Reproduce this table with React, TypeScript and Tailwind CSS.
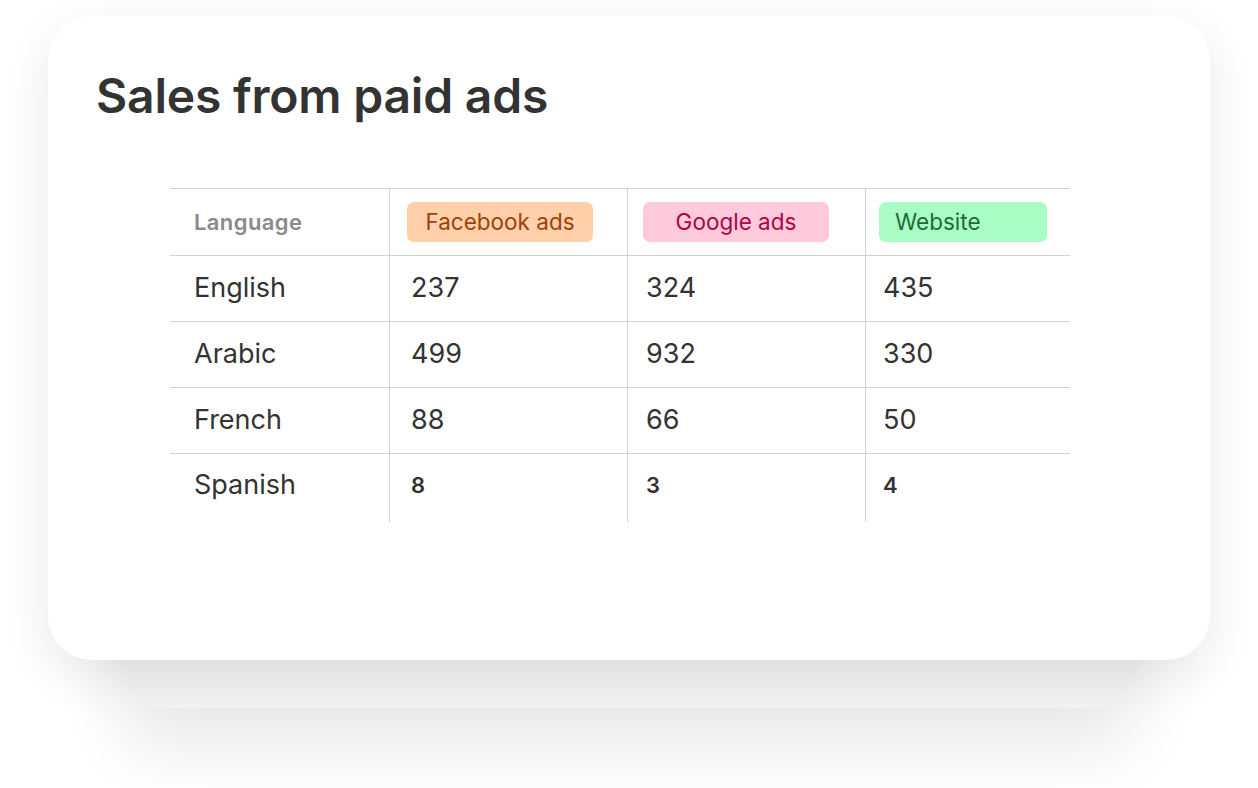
import React from 'react'

const rows = [
  { lang: 'English', fb: '237', g: '324', w: '435' },
  { lang: 'Arabic', fb: '499', g: '932', w: '330' },
  { lang: 'French', fb: '88', g: '66', w: '50' },
  { lang: 'Spanish', fb: '8', g: '3', w: '4', small: true },
]

function Badge({ label, className }: { label: string; className: string }) {
  return (
    <div className={`h-[40px] rounded-[7px] flex items-center text-[22.5px] ${className}`}>
      {label}
    </div>
  )
}

export default function App() {
  return (
    <div
      className="w-[1258px] h-[788px] bg-white overflow-hidden"
      style={{ fontFamily: 'Inter, "Noto Sans", sans-serif' }}
    >
      <div className="relative ml-[48px] mt-[16px] w-[1162px]">
        {/* card behind */}
        <div className="absolute left-[72px] top-[100px] w-[1018px] h-[592px] rounded-[42px] bg-gradient-to-b from-[#e4e4e4] to-[#f3f3f3] shadow-[0_40px_70px_rgba(0,0,0,0.09)]" />

        <div className="relative h-[644px] rounded-[44px] bg-white shadow-[0_16px_50px_rgba(0,0,0,0.09)] pl-[48px] pt-[50px]">
          <h1 className="text-[48px] leading-[60px] font-semibold text-[#333333] tracking-[-0.2px]">
            Sales from paid ads
          </h1>

          <div className="ml-[74px] mt-[62px] w-[900px] grid grid-cols-[219px_238px_238px_205px] border-t-[1.5px] border-[#d2d2d2] text-[#333333]">
            <div className="h-[67px] flex items-center pl-[24px] border-b-[1.5px] border-[#d2d2d2] text-[22px] tracking-[0.4px] font-semibold text-[#8a8a8a]">
              Language
            </div>
            <div className="h-[67px] flex items-center pl-[17px] border-l-[1.5px] border-b-[1.5px] border-[#d2d2d2]">
              <Badge label="Facebook ads" className="w-[186px] justify-center bg-[#ffd0a9] text-[#a1400c]" />
            </div>
            <div className="h-[67px] flex items-center pl-[15px] border-l-[1.5px] border-b-[1.5px] border-[#d2d2d2]">
              <Badge label="Google ads" className="w-[186px] justify-center bg-[#ffcadb] text-[#b3003e]" />
            </div>
            <div className="h-[67px] flex items-center pl-[13px] border-l-[1.5px] border-b-[1.5px] border-[#d2d2d2]">
              <Badge label="Website" className="w-[168px] pl-[16px] bg-[#a9fdc4] text-[#1f6a37]" />
            </div>

            {rows.map((r, i) => {
              const last = i === rows.length - 1
              const rowCls = `${last ? 'h-[68px]' : 'h-[66px] border-b-[1.5px]'} border-[#d2d2d2] flex items-center`
              const numCls = r.small ? 'text-[22px] font-semibold pb-[6px]' : 'text-[27px]'
              return (
                <React.Fragment key={r.lang}>
                  <div className={`${rowCls} pl-[24px] text-[27px] ${last ? 'pb-[6px]' : ''}`}>{r.lang}</div>
                  <div className={`${rowCls} border-l-[1.5px] pl-[21px] ${numCls}`}>{r.fb}</div>
                  <div className={`${rowCls} border-l-[1.5px] pl-[18px] ${numCls}`}>{r.g}</div>
                  <div className={`${rowCls} border-l-[1.5px] pl-[17px] ${numCls}`}>{r.w}</div>
                </React.Fragment>
              )
            })}
          </div>
        </div>
      </div>
    </div>
  )
}
